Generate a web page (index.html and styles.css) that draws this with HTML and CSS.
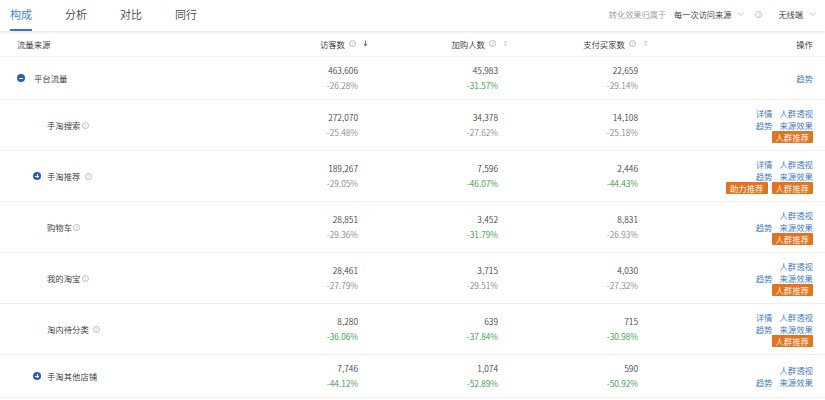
FILE: index.html
```html
<!DOCTYPE html>
<html lang="zh-CN">
<head>
<meta charset="utf-8">
<link rel="stylesheet" href="styles.css">
</head>
<body>
<div class="topbar">
  <div class="tabs">
    <div class="tab active">构成</div>
    <div class="tab">分析</div>
    <div class="tab">对比</div>
    <div class="tab">同行</div>
  </div>
  <div class="filters">
    <span class="flabel">转化效果归属于</span>
    <span class="fsel">每一次访问来源<svg class="chev" width="7" height="4" viewBox="0 0 7 4"><polyline points="0.5,0.5 3.5,3.5 6.5,0.5" fill="none" stroke="#bbb" stroke-width="0.8"/></svg></span>
    <span class="help">?</span>
    <span class="fsel">无线端<svg class="chev" width="7" height="4" viewBox="0 0 7 4"><polyline points="0.5,0.5 3.5,3.5 6.5,0.5" fill="none" stroke="#bbb" stroke-width="0.8"/></svg></span>
  </div>
</div>

<div class="table">
  <div class="row head">
    <div class="c-label">流量来源</div>
    <div class="c-h">访客数<span class="help">?</span><svg class="sort" width="5" height="7" viewBox="0 0 5 7"><line x1="2.5" y1="0.5" x2="2.5" y2="4" stroke="#3d7bd0" stroke-width="1"/><polygon points="0.5,4 4.5,4 2.5,6.5" fill="#3d7bd0"/></svg></div>
    <div class="c-h">加购人数<span class="help">?</span><svg class="sort" width="5" height="7" viewBox="0 0 5 7"><polygon points="0.8,2.8 4.2,2.8 2.5,0.5" fill="#ccc"/><polygon points="0.8,4.2 4.2,4.2 2.5,6.5" fill="#ccc"/></svg></div>
    <div class="c-h">支付买家数<span class="help">?</span><svg class="sort" width="5" height="7" viewBox="0 0 5 7"><polygon points="0.8,2.8 4.2,2.8 2.5,0.5" fill="#ccc"/><polygon points="0.8,4.2 4.2,4.2 2.5,6.5" fill="#ccc"/></svg></div>
    <div class="c-h c-op">操作</div>
  </div>

  <div class="row short">
    <div class="c-label"><span class="tog minus"></span>平台流量</div>
    <div class="c-num"><div>463,606</div><div class="pct">-26.28%</div></div>
    <div class="c-num"><div>45,983</div><div class="pct green">-31.57%</div></div>
    <div class="c-num"><div>22,659</div><div class="pct">-29.14%</div></div>
    <div class="c-op"><div class="line"><a>趋势</a></div></div>
  </div>

  <div class="row">
    <div class="c-label sub">手淘搜索<span class="help tight">?</span></div>
    <div class="c-num"><div>272,070</div><div class="pct">-25.48%</div></div>
    <div class="c-num"><div>34,378</div><div class="pct">-27.62%</div></div>
    <div class="c-num"><div>14,108</div><div class="pct">-25.18%</div></div>
    <div class="c-op">
      <div class="line"><a>详情</a><a>人群透视</a></div>
      <div class="line"><a>趋势</a><a>来源效果</a></div>
      <div class="line"><span class="btn">人群推荐</span></div>
    </div>
  </div>

  <div class="row">
    <div class="c-label sub2"><span class="tog plus"></span>手淘推荐<span class="help">?</span></div>
    <div class="c-num"><div>189,267</div><div class="pct">-29.05%</div></div>
    <div class="c-num"><div>7,596</div><div class="pct green">-46.07%</div></div>
    <div class="c-num"><div>2,446</div><div class="pct green">-44.43%</div></div>
    <div class="c-op">
      <div class="line"><a>详情</a><a>人群透视</a></div>
      <div class="line"><a>趋势</a><a>来源效果</a></div>
      <div class="line"><span class="btn">助力推荐</span><span class="btn">人群推荐</span></div>
    </div>
  </div>

  <div class="row">
    <div class="c-label sub">购物车<span class="help tight">?</span></div>
    <div class="c-num"><div>28,851</div><div class="pct">-29.36%</div></div>
    <div class="c-num"><div>3,452</div><div class="pct green">-31.79%</div></div>
    <div class="c-num"><div>8,831</div><div class="pct">-26.93%</div></div>
    <div class="c-op">
      <div class="line"><a>人群透视</a></div>
      <div class="line"><a>趋势</a><a>来源效果</a></div>
      <div class="line"><span class="btn">人群推荐</span></div>
    </div>
  </div>

  <div class="row">
    <div class="c-label sub">我的淘宝<span class="help tight">?</span></div>
    <div class="c-num"><div>28,461</div><div class="pct">-27.79%</div></div>
    <div class="c-num"><div>3,715</div><div class="pct">-29.51%</div></div>
    <div class="c-num"><div>4,030</div><div class="pct">-27.32%</div></div>
    <div class="c-op">
      <div class="line"><a>人群透视</a></div>
      <div class="line"><a>趋势</a><a>来源效果</a></div>
      <div class="line"><span class="btn">人群推荐</span></div>
    </div>
  </div>

  <div class="row">
    <div class="c-label sub">淘内待分类<span class="help">?</span></div>
    <div class="c-num"><div>8,280</div><div class="pct green">-36.06%</div></div>
    <div class="c-num"><div>639</div><div class="pct green">-37.84%</div></div>
    <div class="c-num"><div>715</div><div class="pct green">-30.98%</div></div>
    <div class="c-op">
      <div class="line"><a>详情</a><a>人群透视</a></div>
      <div class="line"><a>趋势</a><a>来源效果</a></div>
      <div class="line"><span class="btn">人群推荐</span></div>
    </div>
  </div>

  <div class="row short">
    <div class="c-label sub2"><span class="tog plus"></span>手淘其他店铺</div>
    <div class="c-num"><div>7,746</div><div class="pct green">-44.12%</div></div>
    <div class="c-num"><div>1,074</div><div class="pct green">-52.89%</div></div>
    <div class="c-num"><div>590</div><div class="pct green">-50.92%</div></div>
    <div class="c-op">
      <div class="line"><a>人群透视</a></div>
      <div class="line"><a>趋势</a><a>来源效果</a></div>
    </div>
  </div>
</div>
</body>
</html>
```

FILE: styles.css
```css
* { box-sizing: border-box; }
html, body { margin: 0; padding: 0; background: #fff; }
body {
  font-family: "Noto Sans CJK SC", "Noto Sans", sans-serif;
  font-weight: 350;
  color: #333;
  width: 825px;
  overflow: hidden;
}

.topbar {
  height: 31px;
  display: flex;
  justify-content: space-between;
  align-items: stretch;
  box-shadow: 0 1px 3px rgba(0, 0, 0, 0.12);
  position: relative;
  z-index: 1;
}
.tabs {
  display: flex;
  gap: 33px;
  padding-left: 10px;
}
.tab {
  font-size: 11px;
  line-height: 29px;
  color: #444;
  border-bottom: 2px solid transparent;
  height: 31px;
}
.tab.active {
  color: #3a76c8;
  border-bottom-color: #3a76c8;
}
.filters {
  display: flex;
  align-items: center;
  padding-right: 9px;
  font-size: 8.2px;
  height: 28px;
}
.flabel { color: #999; margin-right: 8px; }
.fsel { color: #333; display: inline-flex; align-items: center; }
.chev { margin-left: 6px; }
.filters .help { margin: 0 16px 0 11px; }

.help {
  display: inline-flex;
  align-items: center;
  justify-content: center;
  width: 7px;
  height: 7px;
  border: 0.7px solid #bbb;
  border-radius: 50%;
  font-size: 5px;
  line-height: 1;
  color: #aaa;
  margin-left: 4px;
  vertical-align: middle;
}
.help.tight { margin-left: 1px; }

.table {
  font-size: 8.4px;
}
.row {
  display: grid;
  grid-template-columns: 220px 150px 140px 140px 163px;
  align-items: center;
  height: 51px;
  border-bottom: 1px solid #efefef;
  padding-right: 12px;
}
.row.short { height: 43px; }
.row.head { height: 26px; border-bottom: 1px solid #f2f2f2; color: #333; }

.c-label {
  padding-left: 17px;
  display: flex;
  align-items: center;
  color: #333;
}
.c-label.sub { padding-left: 47px; }
.c-label.sub2 { padding-left: 33px; }

.tog {
  width: 8px;
  height: 8px;
  border-radius: 50%;
  background: #2c5eb5;
  position: relative;
  margin-right: 9px;
  flex: none;
}
.c-label.sub2 .tog { margin-right: 6px; }
.tog::before {
  content: "";
  position: absolute;
  left: 2px;
  top: 3.5px;
  width: 4px;
  height: 1px;
  background: #fff;
}
.tog.plus::after {
  content: "";
  position: absolute;
  left: 3.5px;
  top: 2px;
  width: 1px;
  height: 4px;
  background: #fff;
}

.c-h {
  display: flex;
  justify-content: flex-end;
  align-items: center;
  padding-right: 2px;
}
.sort { margin-left: 7px; }
.row.head .c-op { padding-right: 0; }

.c-num {
  text-align: right;
  padding-right: 12px;
  color: #444;
  line-height: 15.5px;
}
.pct { color: #888; }
.pct.green { color: #36963f; }

.c-op {
  display: flex;
  flex-direction: column;
  align-items: flex-end;
  justify-content: center;
  text-align: right;
}
.line {
  display: flex;
  justify-content: flex-end;
  gap: 7px;
  height: 12px;
  line-height: 12px;
}
.line a { color: #3473c0; text-decoration: none; }
.line:has(.btn) { gap: 4px; }
.btn {
  background: #e2731f;
  color: #fff;
  padding: 0 4px;
  height: 12px;
  line-height: 12px;
  border-radius: 1px;
}
```
